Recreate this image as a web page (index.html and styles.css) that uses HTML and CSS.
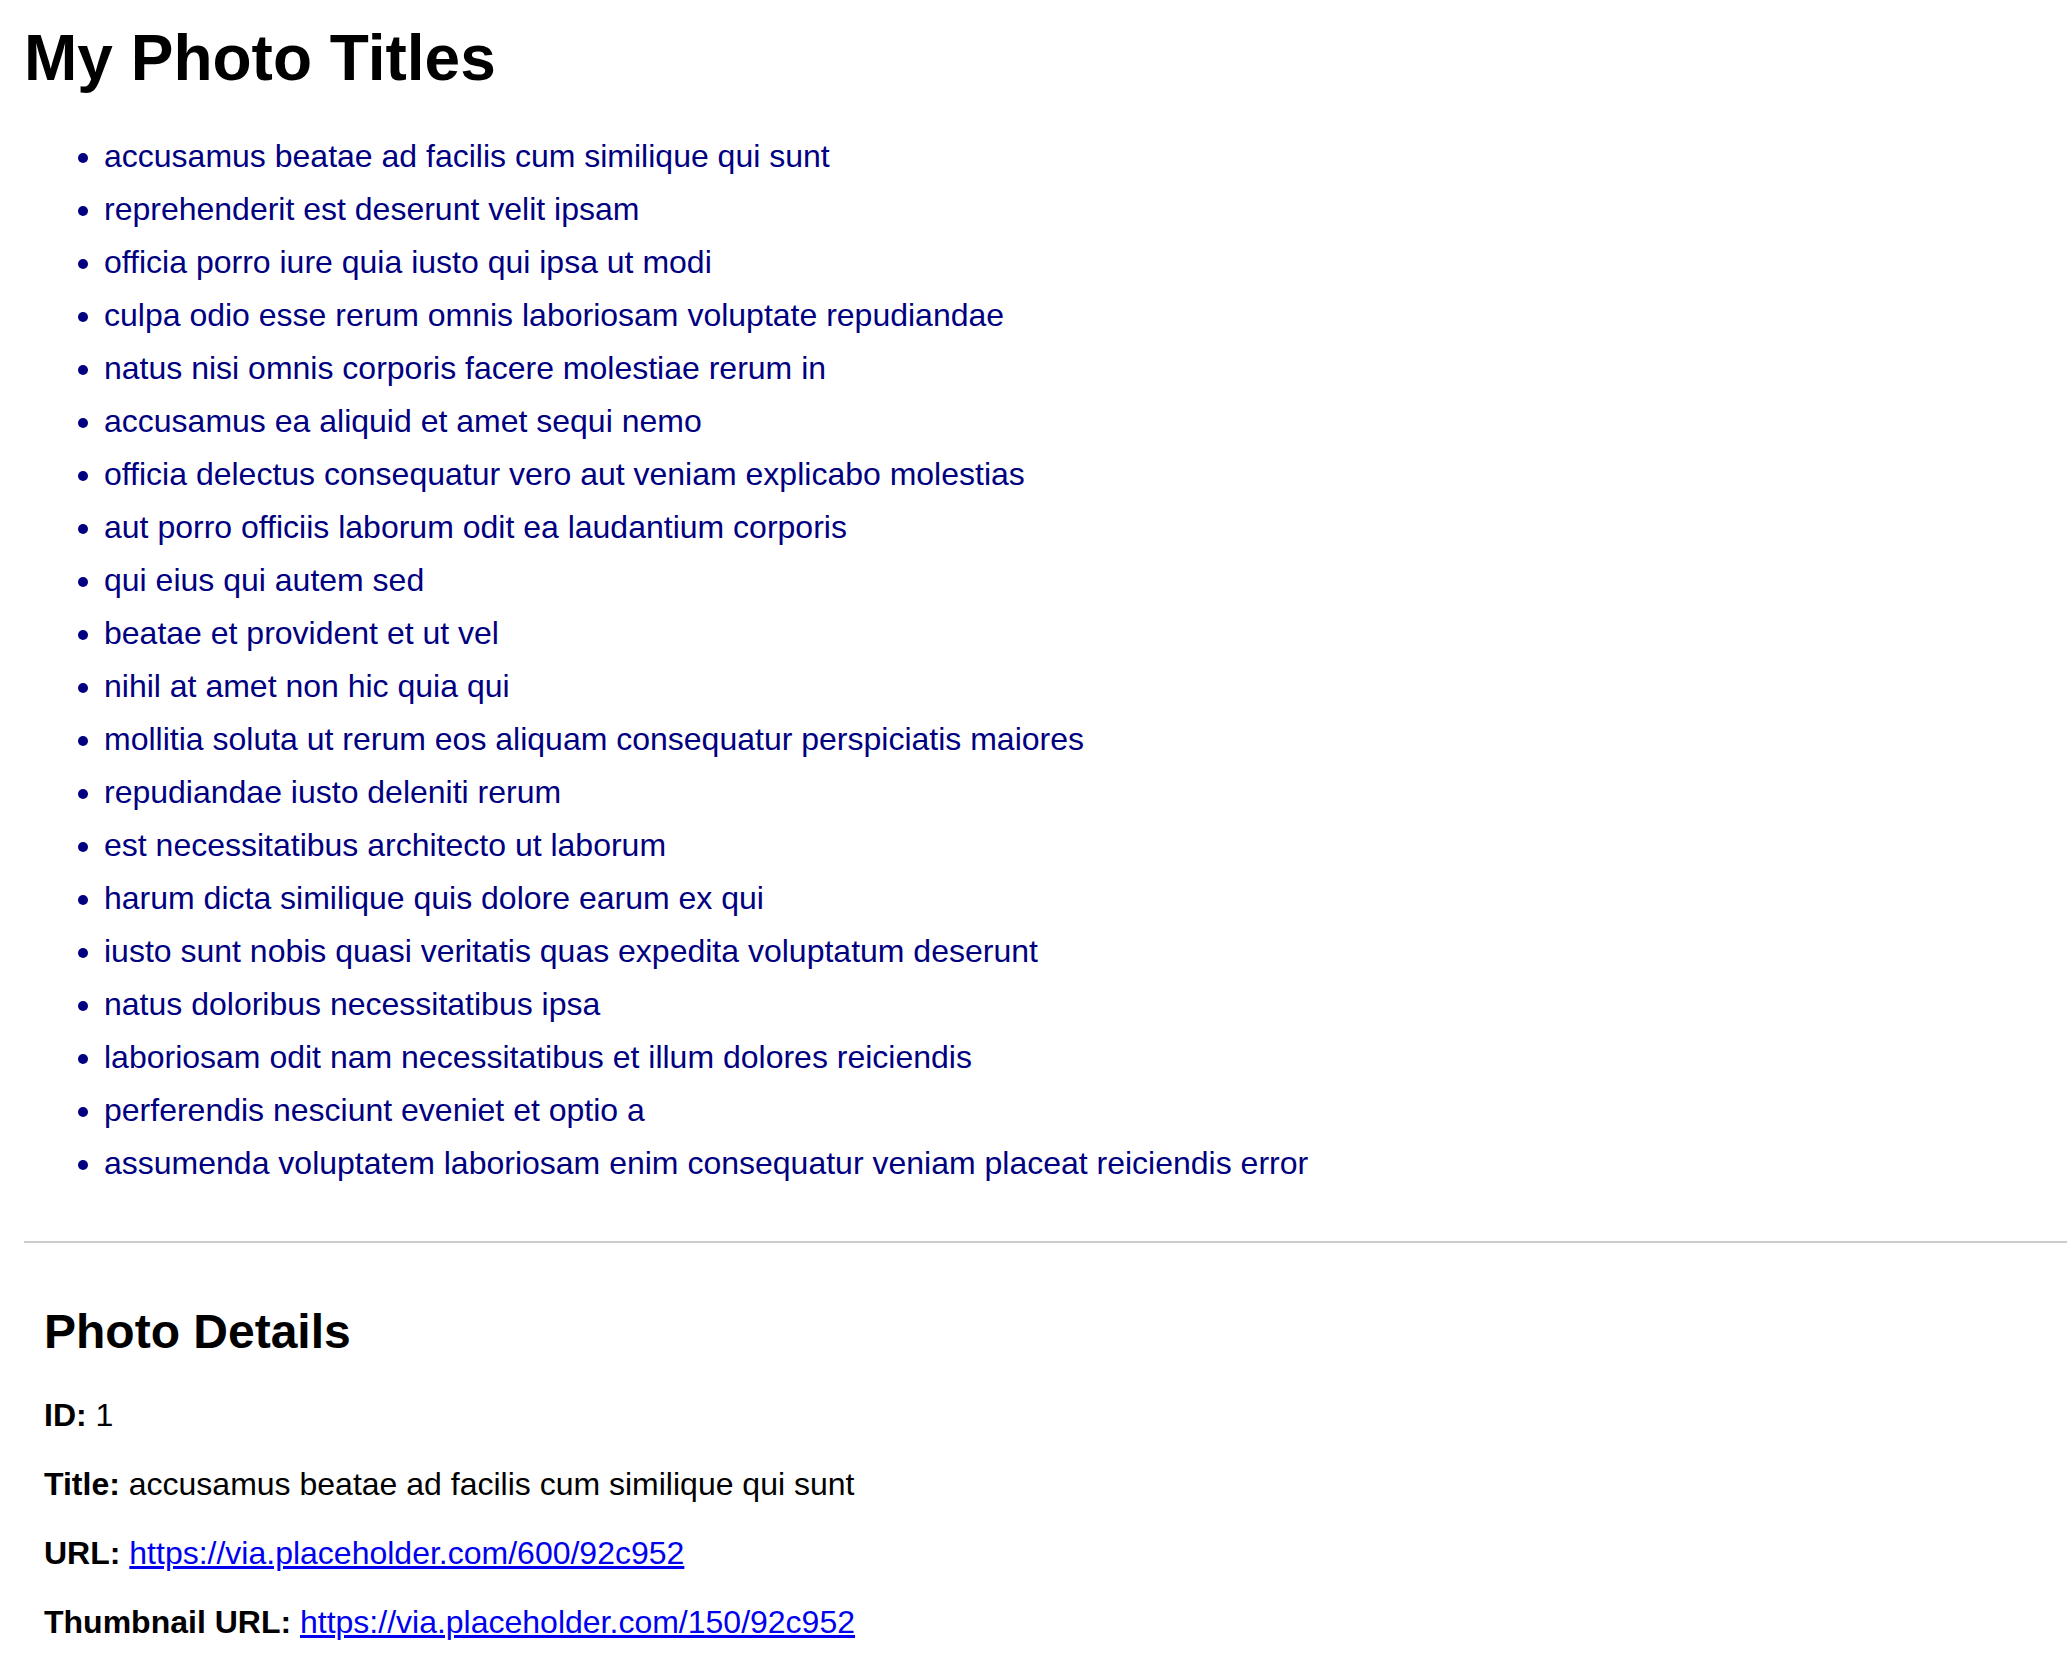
FILE: index.html
```html
<!DOCTYPE html>
<html lang="en">
<head>
<meta charset="utf-8">
<title>My Photo Titles</title>
<link rel="stylesheet" href="styles.css">
</head>
<body>
<div class="page">
  <h1 class="page-title">My Photo Titles</h1>
  <ul class="photo-list">
    <li>accusamus beatae ad facilis cum similique qui sunt</li>
    <li>reprehenderit est deserunt velit ipsam</li>
    <li>officia porro iure quia iusto qui ipsa ut modi</li>
    <li>culpa odio esse rerum omnis laboriosam voluptate repudiandae</li>
    <li>natus nisi omnis corporis facere molestiae rerum in</li>
    <li>accusamus ea aliquid et amet sequi nemo</li>
    <li>officia delectus consequatur vero aut veniam explicabo molestias</li>
    <li>aut porro officiis laborum odit ea laudantium corporis</li>
    <li>qui eius qui autem sed</li>
    <li>beatae et provident et ut vel</li>
    <li>nihil at amet non hic quia qui</li>
    <li>mollitia soluta ut rerum eos aliquam consequatur perspiciatis maiores</li>
    <li>repudiandae iusto deleniti rerum</li>
    <li>est necessitatibus architecto ut laborum</li>
    <li>harum dicta similique quis dolore earum ex qui</li>
    <li>iusto sunt nobis quasi veritatis quas expedita voluptatum deserunt</li>
    <li>natus doloribus necessitatibus ipsa</li>
    <li>laboriosam odit nam necessitatibus et illum dolores reiciendis</li>
    <li>perferendis nesciunt eveniet et optio a</li>
    <li>assumenda voluptatem laboriosam enim consequatur veniam placeat reiciendis error</li>
  </ul>
  <section class="details">
    <h2 class="details-title">Photo Details</h2>
    <p class="detail"><strong>ID:</strong> 1</p>
    <p class="detail"><strong>Title:</strong> accusamus beatae ad facilis cum similique qui sunt</p>
    <p class="detail"><strong>URL:</strong> <a href="https://via.placeholder.com/600/92c952">https://via.placeholder.com/600/92c952</a></p>
    <p class="detail"><strong>Thumbnail URL:</strong> <a href="https://via.placeholder.com/150/92c952">https://via.placeholder.com/150/92c952</a></p>
  </section>
</div>
</body>
</html>
```

FILE: styles.css
```css
html, body {
  margin: 0;
  padding: 0;
  background: #ffffff;
}

body {
  font-family: "Liberation Sans", Arial, sans-serif;
  font-size: 32px;
  color: #000000;
}

.page {
  padding: 21px 0 0 24px;
}

.page-title {
  font-size: 64px;
  font-weight: bold;
  margin: 0;
  line-height: normal;
}

.photo-list {
  margin: 35px 0 51px 0;
  padding: 0 0 0 80px;
  color: #000080;
  list-style: disc;
}

.photo-list li {
  padding: 8px 0;
  line-height: normal;
}

.details {
  border-top: 2px solid #cccccc;
  padding: 20px;
}

.details-title {
  font-size: 48px;
  font-weight: bold;
  margin: 41px 0 38px;
  line-height: normal;
}

.detail {
  margin: 32px 0;
  line-height: normal;
}

.detail:last-child {
  margin-bottom: 0;
}

.detail a {
  color: #0000ee;
  text-decoration: underline;
}
```
